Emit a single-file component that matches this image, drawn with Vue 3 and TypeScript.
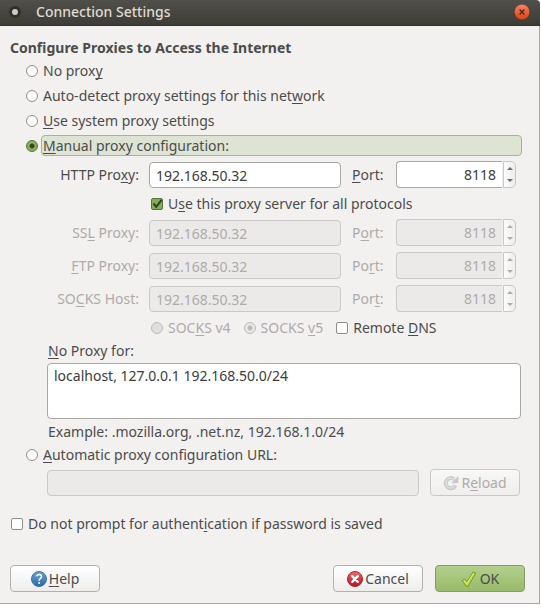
<script setup lang="ts">
import { reactive, ref } from 'vue'

interface Mnemonic {
  before: string
  key: string
  after: string
}

interface ProxyRow {
  id: string
  label: Mnemonic
  port: Mnemonic
  host: string
  portNumber: number
}

const mode = ref('manual')
const socksVersion = ref('v5')
const useForAll = ref(true)
const remoteDns = ref(false)
const skipAuthPrompt = ref(false)
const exceptions = ref('localhost, 127.0.0.1 192.168.50.0/24')
const configUrl = ref('')

const modes: { value: string; label: Mnemonic }[] = [
  { value: 'none', label: { before: 'No prox', key: 'y', after: '' } },
  { value: 'detect', label: { before: 'Auto-detect proxy settings for this net', key: 'w', after: 'ork' } },
  { value: 'system', label: { before: '', key: 'U', after: 'se system proxy settings' } },
  { value: 'manual', label: { before: '', key: 'M', after: 'anual proxy configuration:' } },
]

const http = reactive<ProxyRow>({
  id: 'http',
  label: { before: 'HTTP Pro', key: 'x', after: 'y:' },
  port: { before: '', key: 'P', after: 'ort:' },
  host: '192.168.50.32',
  portNumber: 8118,
})

const shared: ProxyRow[] = [
  { id: 'ssl', label: { before: 'SS', key: 'L', after: ' Proxy:' }, port: { before: 'P', key: 'o', after: 'rt:' }, host: '192.168.50.32', portNumber: 8118 },
  { id: 'ftp', label: { before: '', key: 'F', after: 'TP Proxy:' }, port: { before: 'Po', key: 'r', after: 't:' }, host: '192.168.50.32', portNumber: 8118 },
  { id: 'socks', label: { before: 'SO', key: 'C', after: 'KS Host:' }, port: { before: 'Por', key: 't', after: ':' }, host: '192.168.50.32', portNumber: 8118 },
]
</script>

<template>
  <main class="window">
    <header class="titlebar">
      <span class="menu-dot"></span>
      <h1>Connection Settings</h1>
      <button type="button" class="close" aria-label="Close">
        <svg viewBox="0 0 16 16" width="16" height="16">
          <defs>
            <linearGradient id="closeFill" x1="0" y1="0" x2="0" y2="1">
              <stop offset="0" stop-color="#f68a68" />
              <stop offset=".5" stop-color="#ec5f35" />
              <stop offset="1" stop-color="#dc4716" />
            </linearGradient>
          </defs>
          <circle cx="8" cy="8" r="7.7" fill="url(#closeFill)" stroke="#34322d" stroke-width=".4" />
          <path d="M5.6 5.6l4.8 4.8M10.4 5.6l-4.8 4.8" stroke="#4a2a1c" stroke-width="1.4" />
        </svg>
      </button>
    </header>

    <form class="body" @submit.prevent>
      <h2>Configure Proxies to Access the Internet</h2>

      <div v-for="m in modes" :key="m.value" class="mode">
        <input :id="'mode-' + m.value" v-model="mode" type="radio" name="mode" :value="m.value" />
        <label :for="'mode-' + m.value" :class="{ current: mode === m.value }">{{ m.label.before }}<u>{{ m.label.key }}</u>{{ m.label.after }}</label>
      </div>

      <div class="manual">
        <div class="proxy">
          <label class="name" for="http-host">{{ http.label.before }}<u>{{ http.label.key }}</u>{{ http.label.after }}</label>
          <input id="http-host" v-model="http.host" class="field" type="text" />
          <label class="port" for="http-port">{{ http.port.before }}<u>{{ http.port.key }}</u>{{ http.port.after }}</label>
          <div class="spin">
            <input id="http-port" v-model.number="http.portNumber" class="field" type="text" inputmode="numeric" />
            <div class="steps">
              <button type="button" aria-label="Increase" @click="http.portNumber++"><i class="up"></i></button>
              <button type="button" aria-label="Decrease" @click="http.portNumber--"><i class="down"></i></button>
            </div>
          </div>
        </div>

        <div class="check share">
          <input id="share" v-model="useForAll" type="checkbox" />
          <label for="share">U<u>s</u>e this proxy server for all protocols</label>
        </div>

        <div class="stack">
          <div v-for="row in shared" :key="row.id" class="proxy" :class="{ off: useForAll }">
            <label class="name" :for="row.id + '-host'">{{ row.label.before }}<u>{{ row.label.key }}</u>{{ row.label.after }}</label>
            <input :id="row.id + '-host'" :value="row.host" class="field" type="text" :disabled="useForAll" />
            <label class="port" :for="row.id + '-port'">{{ row.port.before }}<u>{{ row.port.key }}</u>{{ row.port.after }}</label>
            <div class="spin">
              <input :id="row.id + '-port'" :value="row.portNumber" class="field" type="text" inputmode="numeric" :disabled="useForAll" />
              <div class="steps">
                <button type="button" aria-label="Increase" :disabled="useForAll"><i class="up"></i></button>
                <button type="button" aria-label="Decrease" :disabled="useForAll"><i class="down"></i></button>
              </div>
            </div>
          </div>
        </div>

        <div class="socks">
          <div class="check off">
            <input id="socks4" v-model="socksVersion" type="radio" name="socks" value="v4" disabled />
            <label for="socks4">SOC<u>K</u>S v4</label>
          </div>
          <div class="check off">
            <input id="socks5" v-model="socksVersion" type="radio" name="socks" value="v5" disabled />
            <label for="socks5">SOCKS <u>v</u>5</label>
          </div>
          <div class="check">
            <input id="dns" v-model="remoteDns" type="checkbox" />
            <label for="dns">Remote <u>D</u>NS</label>
          </div>
        </div>
      </div>

      <div class="exceptions">
        <label for="exceptions"><u>N</u>o Proxy for:</label>
        <textarea id="exceptions" v-model="exceptions" class="field"></textarea>
        <p>Example: .mozilla.org, .net.nz, 192.168.1.0/24</p>
      </div>

      <div class="mode auto">
        <input id="mode-auto" v-model="mode" type="radio" name="mode" value="auto" />
        <label id="auto-label" for="mode-auto"><u>A</u>utomatic proxy configuration URL:</label>
      </div>

      <div class="url">
        <input v-model="configUrl" class="field" type="text" aria-labelledby="auto-label" disabled />
        <button type="button" class="btn" disabled>
          <svg viewBox="0 0 16 16" width="16" height="16">
            <path d="M12.4 10.4A5.1 5.1 0 1 1 11 4.2" fill="none" stroke="#c9c9c9" stroke-width="4" />
            <path d="M15.4 .8v7.4H8.2z" fill="#c9c9c9" />
            <path d="M12 10.6A4.9 4.9 0 1 1 11.2 4.5" fill="none" stroke="#dcdcdc" stroke-width="1.8" />
          </svg>
          <span>R<u>e</u>load</span>
        </button>
      </div>

      <div class="check auth">
        <input id="auth" v-model="skipAuthPrompt" type="checkbox" />
        <label for="auth">Do not prompt for authent<u>i</u>cation if password is saved</label>
      </div>

      <footer class="actions">
        <button type="button" class="btn help">
          <svg viewBox="0 0 16 16" width="16" height="16">
            <defs>
              <linearGradient id="helpFill" x1="0" y1="0" x2="0" y2="1">
                <stop offset="0" stop-color="#6ba5d6" />
                <stop offset="1" stop-color="#2868a4" />
              </linearGradient>
            </defs>
            <circle cx="8" cy="8" r="7.5" fill="url(#helpFill)" stroke="#3a71a8" />
            <path d="M5.6 5.4Q6 3.5 8.1 3.5Q10.5 3.6 10.5 5.7Q10.5 6.8 9.2 7.7Q8.1 8.4 8.1 9.7" fill="none" stroke="#fff" stroke-width="1.5" />
            <circle cx="8.1" cy="12.1" r="1" fill="#fff" />
          </svg>
          <span><u>H</u>elp</span>
        </button>
        <button type="button" class="btn cancel">
          <svg viewBox="0 0 16 16" width="16" height="16">
            <defs>
              <linearGradient id="cancelFill" x1="0" y1="0" x2="0" y2="1">
                <stop offset="0" stop-color="#ed7272" />
                <stop offset=".5" stop-color="#d33842" />
                <stop offset="1" stop-color="#b71825" />
              </linearGradient>
            </defs>
            <circle cx="8" cy="8" r="7.5" fill="url(#cancelFill)" stroke="#b3202b" />
            <path d="M5.2 5.2l5.6 5.6M10.8 5.2l-5.6 5.6" stroke="#fff" stroke-width="2.4" stroke-linecap="round" />
          </svg>
          <span>Cancel</span>
        </button>
        <button type="submit" class="btn ok">
          <svg viewBox="0 0 16 16" width="16" height="16">
            <path d="M1.2 9.6L3.7 8.1L5.9 10.9L12.2 .9L14.7 2L7.1 15.2L5.2 15.3Z" fill="#bfdc4a" stroke="#6f9a1e" stroke-width="1" stroke-linejoin="round" />
            <path d="M2.8 9.8L3.5 9.4L5.9 12.5L12.5 2.2" fill="none" stroke="#e2f08f" stroke-width=".8" />
          </svg>
          <span>OK</span>
        </button>
      </footer>
    </form>
  </main>
</template>

<style>
body {
  background: #fdfdfd;
}
</style>

<style scoped>
.window {
  margin-right: 1px;
  font: 14px/20px 'Noto Sans', 'Open Sans', sans-serif;
  color: #4c4c4c;
}

.window * {
  box-sizing: border-box;
}

.titlebar {
  display: flex;
  align-items: center;
  height: 26px;
  padding: 0 10px 1px 9px;
  background: linear-gradient(#504f4a, #3d3c37);
  border-bottom: 1px solid #31302c;
  border-radius: 0 4px 0 0;
}

.menu-dot {
  width: 12px;
  height: 12px;
  border: 3px solid #302f2b;
  border-radius: 50%;
  background: #cfcbc3;
}

h1 {
  flex: 1;
  margin: 0 0 0 15px;
  font-size: 14px;
  font-weight: 500;
  color: #dfdbd2;
}

.close {
  display: flex;
  padding: 0;
  border: 0;
  background: none;
}

.body {
  padding: 12px 14px 11px 10px;
  background: #f2f1f0;
  border-right: 1px solid #a9a7a5;
  border-bottom: 1px solid #a9a7a5;
}

h2 {
  margin: 0;
  font-size: 14px;
  font-weight: 700;
}

u {
  text-decoration: underline 1px;
  text-underline-offset: 2px;
  text-decoration-skip-ink: none;
}

input,
textarea,
button {
  margin: 0;
  font: inherit;
  color: inherit;
}

input[type='radio'],
input[type='checkbox'] {
  flex: none;
  appearance: none;
  width: 12px;
  height: 12px;
  border: 1px solid #8f8c88;
  background: #fff;
}

input[type='radio'] {
  border-radius: 50%;
}

input[type='checkbox'] {
  border-radius: 2px;
}

input[type='radio']:checked {
  border-color: #56733a;
  background: radial-gradient(circle, #38452b 2px, #8fb55f 3px, #7fa650);
}

input[type='radio']:disabled {
  border-color: #bdbab7;
  background: #e0dfde;
}

input[type='radio']:disabled:checked {
  background: radial-gradient(circle, #bbb9b7 2px, #e9e8e7 3px);
}

input[type='checkbox']:checked {
  border-color: #56733a;
  background: #85ad57 url("data:image/svg+xml,%3Csvg xmlns='http://www.w3.org/2000/svg' viewBox='0 0 10 10'%3E%3Cpath d='M1.5 4.5L4.2 7.8L9.6 .8' fill='none' stroke='%23343f2a' stroke-width='2'/%3E%3C/svg%3E");
}

.mode {
  display: flex;
  align-items: center;
  gap: 3px;
  height: 25px;
  padding: 0 3px 0 16px;
}

.mode label {
  flex: 1;
  padding-left: 1px;
  border: 1px solid transparent;
  border-radius: 4px;
  line-height: 19px;
}

.mode label.current {
  background: #dde4d4;
  border-color: #9fbc7d;
}

.manual {
  padding: 3px 9px 0 38px;
}

.proxy {
  display: grid;
  grid-template-columns: 91px minmax(0, 1fr) 35px 120px;
  column-gap: 10px;
  align-items: end;
}

.name {
  text-align: right;
}

.name,
.port {
  line-height: 26px;
}

.port {
  padding-left: 1px;
}

.off {
  color: #aeaba8;
}

.field {
  display: block;
  width: 100%;
  min-width: 0;
  height: 26px;
  padding: 0 6px;
  border: 1px solid #aaa8a5;
  border-radius: 4px;
  background: #fff;
  color: #3c3c3c;
}

.field:disabled {
  border-color: #cbc9c7;
  background: #ebeae9;
  color: #aeaba8;
}

.spin {
  display: flex;
  height: 27px;
}

.spin .field {
  flex: 1;
  height: 27px;
  border-right: 0;
  border-radius: 4px 0 0 4px;
  text-align: right;
}

.steps {
  display: flex;
  flex-direction: column;
  width: 13px;
  margin-left: 1px;
  border: 1px solid #cbc9c7;
  border-radius: 0 5px 5px 0;
  background: linear-gradient(90deg, #fcfcfc, #eeedec);
  overflow: hidden;
}

.steps button {
  display: flex;
  flex: 1;
  align-items: center;
  justify-content: center;
  padding: 0;
  border: 0;
  background: none;
  color: #6b6966;
}

.steps button:disabled {
  color: #aeaba8;
}

.up,
.down {
  border: 3px solid transparent;
}

.up {
  border-top: 0;
  border-bottom-color: currentColor;
}

.down {
  border-bottom: 0;
  border-top-color: currentColor;
}

.check {
  display: flex;
  align-items: center;
  gap: 5px;
}

.share {
  height: 31px;
  padding-left: 103px;
}

.stack {
  display: flex;
  flex-direction: column;
  gap: 6px;
}

.socks {
  display: flex;
  align-items: center;
  gap: 13px;
  height: 28px;
  margin-top: 2px;
  padding-left: 103px;
}

.exceptions {
  padding: 0 4px 0 37px;
}

.exceptions label {
  display: block;
  padding: 0 1px;
  margin: -1px 0 2px;
}

textarea.field {
  height: 56px;
  padding: 2px 6px;
  resize: none;
}

.exceptions p {
  margin: 3px 0 0;
  padding-left: 1px;
}

.auto {
  margin-bottom: 2px;
}

.url {
  display: flex;
  align-items: flex-end;
  gap: 11px;
  padding: 0 5px 0 37px;
}

.url .field {
  flex: 1;
}

.btn {
  display: flex;
  flex: none;
  align-items: center;
  justify-content: center;
  gap: 2px;
  width: 90px;
  height: 27px;
  padding: 0 1px;
  border: 1px solid #b3b1ae;
  border-radius: 4px;
  background: linear-gradient(#fff, #eeedec);
}

.btn:disabled {
  border-color: #cbc9c7;
  background: linear-gradient(#f8f8f7, #efeeed);
  color: #aeaba8;
}

.auth {
  margin-top: 18px;
  padding-left: 1px;
}

.actions {
  display: flex;
  gap: 12px;
  margin-top: 31px;
}

.help {
  margin-right: auto;
}

.ok {
  gap: 3px;
  border-color: #849c69;
  background: linear-gradient(#b2cf8c, #98bb6b);
}
</style>
